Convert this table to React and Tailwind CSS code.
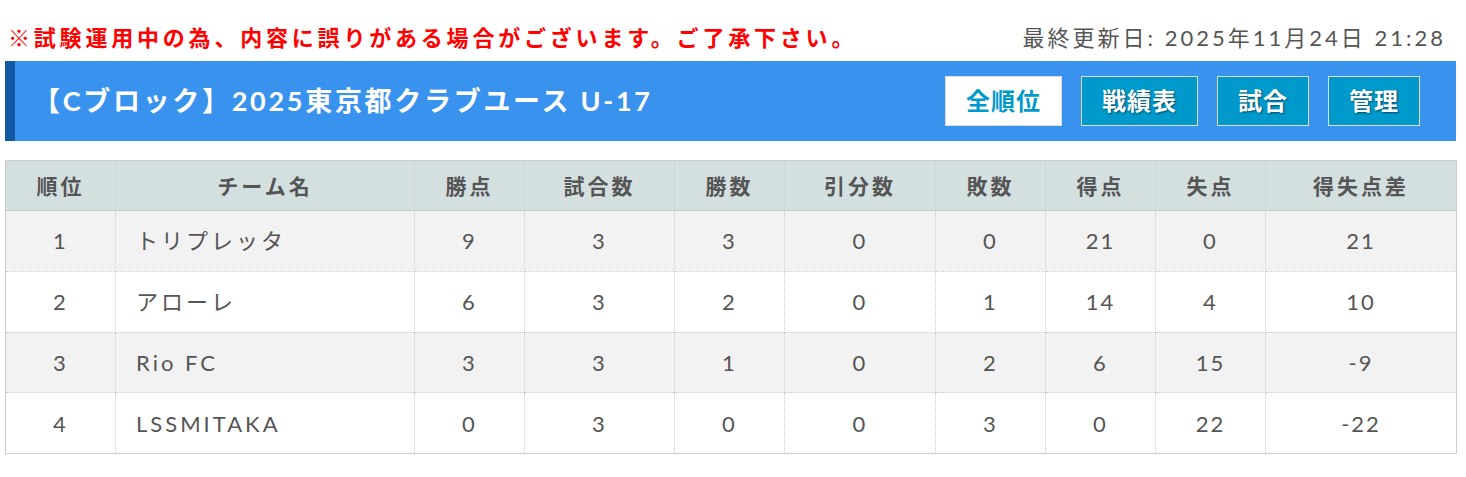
const teams = [
  { rank: 1, name: 'トリプレッタ', pts: 9, games: 3, win: 3, draw: 0, lose: 0, gf: 21, ga: 0, diff: 21 },
  { rank: 2, name: 'アローレ', pts: 6, games: 3, win: 2, draw: 0, lose: 1, gf: 14, ga: 4, diff: 10 },
  { rank: 3, name: 'Rio FC', pts: 3, games: 3, win: 1, draw: 0, lose: 2, gf: 6, ga: 15, diff: -9 },
  { rank: 4, name: 'LSSMITAKA', pts: 0, games: 3, win: 0, draw: 0, lose: 3, gf: 0, ga: 22, diff: -22 },
];

const heads = ['順位', 'チーム名', '勝点', '試合数', '勝数', '引分数', '敗数', '得点', '失点', '得失点差'];

const font = { fontFamily: 'Lato, "Noto Sans CJK JP", sans-serif' };

function NavButton({ label, active }) {
  return (
    <button
      className={
        active
          ? 'h-[50px] px-[20px] border border-[#dddddd] bg-white text-[#0099cc] text-[24px] font-bold tracking-[1px]'
          : 'h-[50px] px-[20px] border border-[#dddddd] bg-[#0099cc] text-white text-[24px] font-bold tracking-[1px] [text-shadow:1px_1px_2px_rgba(0,0,0,0.5)]'
      }
    >
      {label}
    </button>
  );
}

export default function App() {
  return (
    <div className="w-[1466px] bg-white pl-[5px] pr-[10px] pt-[18px]" style={font}>
      {/* notice + updated */}
      <div className="flex items-center justify-between h-[38px] pl-[3px] pr-[10px]">
        <span className="text-[22px] font-bold text-[#ff0000] tracking-[3.8px]">
          ※試験運用中の為、内容に誤りがある場合がございます。ご了承下さい。
        </span>
        <span className="text-[22px] text-[#555555] tracking-[3px]">最終更新日: 2025年11月24日 21:28</span>
      </div>

      {/* title bar */}
      <div className="mt-[5px] h-[80px] flex items-center justify-between bg-[#3892ee] border-l-[10px] border-[#1259a4] pl-[18px] pr-[36px]">
        <h1 className="text-[27px] font-bold text-white tracking-[2.7px]">【Cブロック】2025東京都クラブユース U-17</h1>
        <div className="flex gap-[19px]">
          <NavButton label="全順位" active />
          <NavButton label="戦績表" />
          <NavButton label="試合" />
          <NavButton label="管理" />
        </div>
      </div>

      {/* standings */}
      <table className="mt-[19px] w-[1451px] border-collapse border border-[#cccccc] table-fixed text-[#555555]">
        <colgroup>
          <col className="w-[110px]" />
          <col className="w-[299px]" />
          <col className="w-[110px]" />
          <col className="w-[150px]" />
          <col className="w-[110px]" />
          <col className="w-[151px]" />
          <col className="w-[110px]" />
          <col className="w-[110px]" />
          <col className="w-[110px]" />
          <col className="w-[191px]" />
        </colgroup>
        <thead>
          <tr className="h-[50px] bg-[#d4e0e0] border-b border-[#cccccc]">
            {heads.map((h) => (
              <th key={h} className="border-x border-dotted border-[#cccccc] text-[21px] font-bold tracking-[3px] text-center">
                {h}
              </th>
            ))}
          </tr>
        </thead>
        <tbody>
          {teams.map((t, i) => (
            <tr key={t.rank} className={i % 2 === 0 ? 'h-[60.75px] bg-[#f2f2f2]' : 'h-[60.75px] bg-white'}>
              <td className="border border-dotted border-[#cccccc] text-center text-[22px] tracking-[2px]">{t.rank}</td>
              <td className="border border-dotted border-[#cccccc] pl-[20px] text-[22px] tracking-[3px]">{t.name}</td>
              {[t.pts, t.games, t.win, t.draw, t.lose, t.gf, t.ga, t.diff].map((v, j) => (
                <td key={j} className="border border-dotted border-[#cccccc] text-center text-[22px] tracking-[2px]">
                  {v}
                </td>
              ))}
            </tr>
          ))}
        </tbody>
      </table>
    </div>
  );
}
